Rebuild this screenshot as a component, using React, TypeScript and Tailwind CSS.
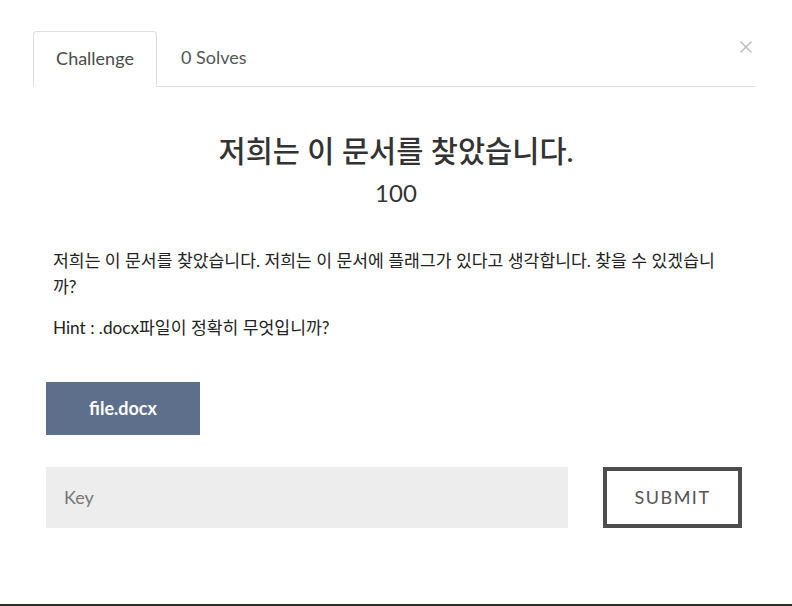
import { X } from "lucide-react";

export default function App() {
  return (
    <div className="flex h-[606px] w-[792px] flex-col bg-white font-['Lato','Noto_Sans_CJK_KR',sans-serif] text-[#333]">
      <div className="flex-1 px-[33px] pt-[31px]">
        {/* tabs */}
        <div className="relative flex h-[56px] w-[722px] border-b border-[#dedede]">
          <div className="-mb-px flex h-[56px] w-[124px] items-center justify-center rounded-t-[4px] border border-b-white border-[#dedede] bg-white pb-[2px] text-[18px] text-[#4a4a4a]">
            Challenge
          </div>
          <div className="flex h-[55px] items-center pb-[2px] pl-[24px] text-[18px] text-[#555]">
            0 Solves
          </div>
          <button className="absolute right-[-1px] top-[6px] text-[#bbb]">
            <X size={20} strokeWidth={1.8} />
          </button>
        </div>

        {/* title */}
        <div className="mt-[46px] text-center text-[29.5px] font-medium leading-[36px] text-[#333]">
          저희는 이 문서를 찾았습니다.
        </div>
        <div className="mt-[9px] text-center text-[24px] leading-[30px] text-[#333]">
          100
        </div>

        {/* description */}
        <div className="ml-[20px] mt-[40px] w-[676px] text-[17.2px] leading-[26px] text-[#222]">
          <p>
            저희는 이 문서를 찾았습니다. 저희는 이 문서에 플래그가 있다고 생각합니다. 찾을 수 있겠습니까?
          </p>
          <p className="mt-[15px]">Hint : .docx파일이 정확히 무엇입니까?</p>
        </div>

        {/* file button */}
        <div className="ml-[13px] mt-[41px]">
          <button className="flex h-[53px] w-[154px] items-center justify-center bg-[#5d6f8b] text-[18px] font-bold text-white">
            file.docx
          </button>
        </div>

        {/* key + submit */}
        <div className="ml-[13px] mt-[32px] flex w-[696px] items-center">
          <div className="flex h-[61px] w-[522px] items-center bg-[#ededed] pl-[18px] text-[18px] text-[#777]">
            Key
          </div>
          <div className="flex-1" />
          <button className="flex h-[61px] w-[139px] items-center justify-center border-[4px] border-[#4d4d4d] bg-white text-[18px] tracking-[1.5px] text-[#555]">
            SUBMIT
          </button>
        </div>
      </div>
      <div className="h-[2px] w-full bg-[#2b2e2b]" />
    </div>
  );
}
